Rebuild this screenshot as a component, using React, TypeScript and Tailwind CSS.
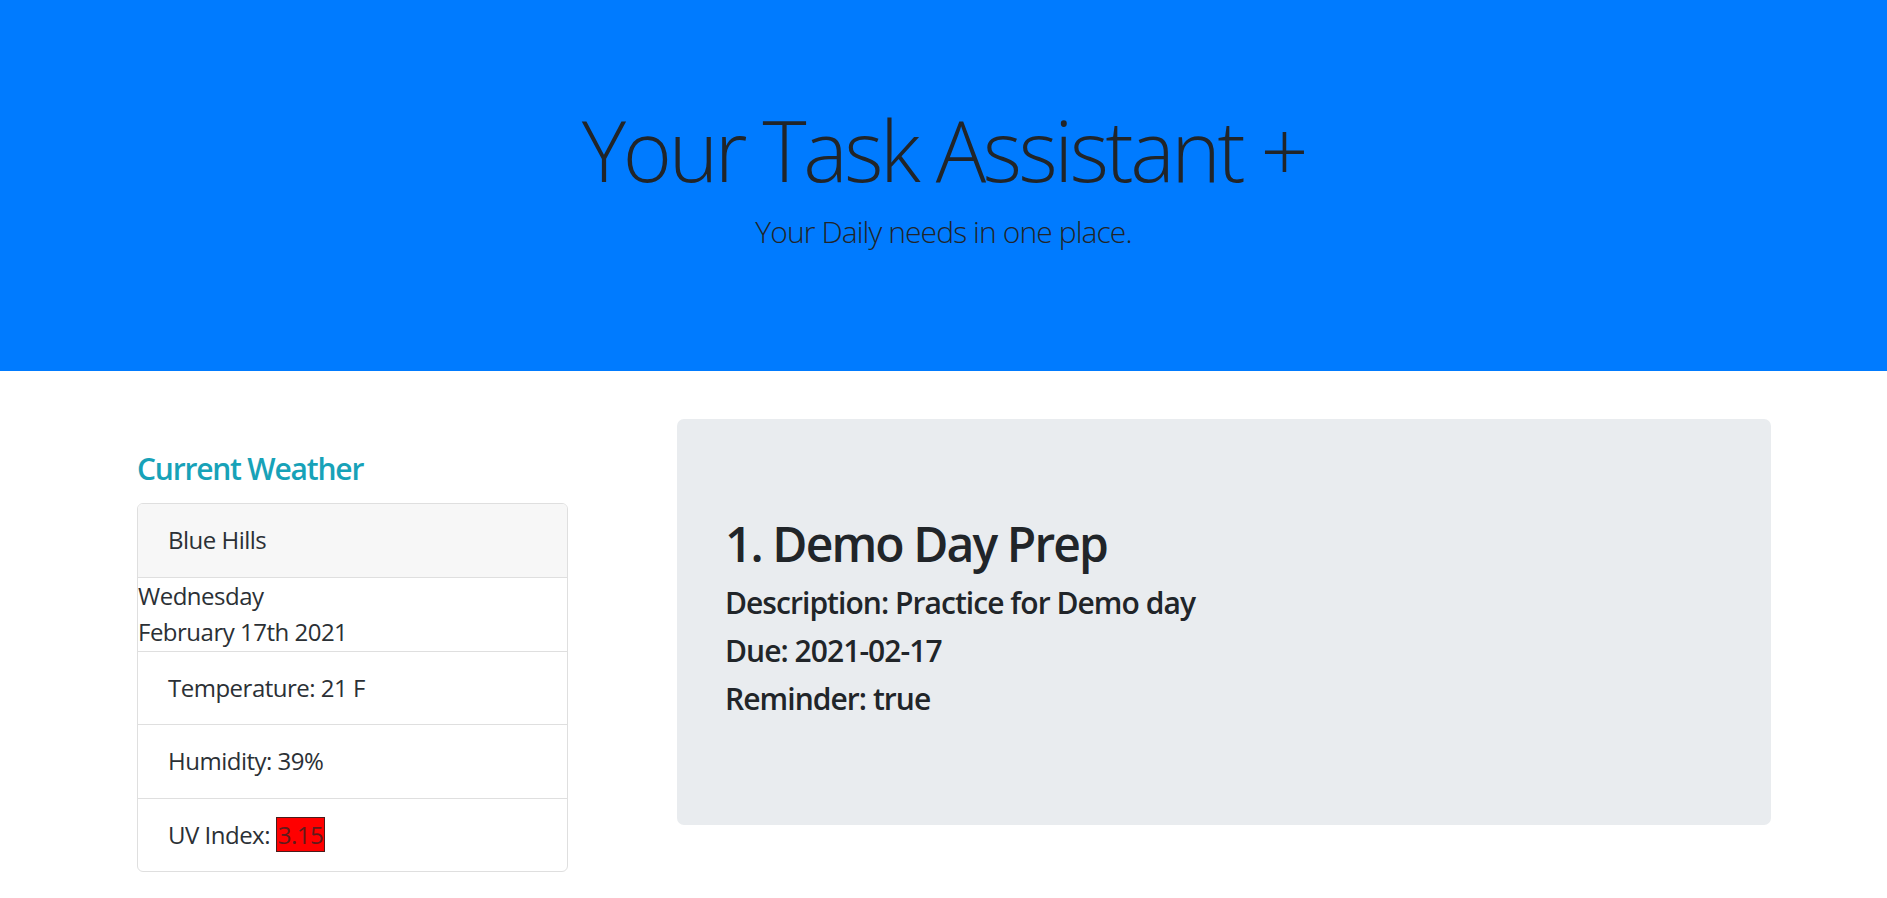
import React from 'react'

const font = { fontFamily: '"Open Sans", "Noto Sans", sans-serif' }

function Header() {
  return (
    <header className="bg-[#007bff] h-[371px] flex flex-col items-center pt-[100px] text-[#212529]">
      <h1 className="text-[84px] font-light leading-[1.2] tracking-[-3.4px] mb-[8px]">Your Task Assistant +</h1>
      <p className="text-[30px] font-light leading-[1.5] tracking-[-0.9px]">Your Daily needs in one place.</p>
    </header>
  )
}

function WeatherRow({ children }: { children: React.ReactNode }) {
  return (
    <li className="py-[18px] px-[30px] border-t border-[#dfdfdf]">{children}</li>
  )
}

function Weather() {
  return (
    <div className="w-[431px] mt-[32px] shrink-0">
      <h4 className="text-[30px] font-semibold leading-[1.2] tracking-[-1.2px] mb-[16px] text-[#17a2b8]">Current Weather</h4>
      <div className="border border-[#dfdfdf] rounded-[6px] overflow-hidden text-[24px] leading-[36.5px] tracking-[-0.5px] text-[#2b3035]">
        <div className="bg-[#f7f7f7] py-[18px] px-[30px]">Blue Hills</div>
        <ul>
          <li className="border-t border-[#dfdfdf]">
            <div>Wednesday</div>
            <div>February 17th 2021</div>
          </li>
          <WeatherRow>Temperature: 21 F</WeatherRow>
          <WeatherRow>Humidity: 39%</WeatherRow>
          <WeatherRow>
            UV Index: <span className="bg-[#ff0000] border border-[#4a1c1c] text-[#5e1b1b] px-[1px]">3.15</span>
          </WeatherRow>
        </ul>
      </div>
    </div>
  )
}

function Task() {
  return (
    <div className="bg-[#e9ecef] rounded-[7px] w-[1094px] px-[48px] py-[96px] text-[#212529] ml-[109px]">
      <h2 className="text-[48px] font-semibold leading-[1.2] tracking-[-1.9px] mb-[12px]">1. Demo Day Prep</h2>
      <h5 className="text-[30px] font-semibold leading-[1.2] tracking-[-0.95px] mb-[12px]">Description: Practice for Demo day</h5>
      <h5 className="text-[30px] font-semibold leading-[1.2] tracking-[-0.95px] mb-[12px]">Due: 2021-02-17</h5>
      <h5 className="text-[30px] font-semibold leading-[1.2] tracking-[-0.95px] mb-[12px]">Reminder: true</h5>
    </div>
  )
}

export default function App() {
  return (
    <div style={font} className="min-h-screen bg-white">
      <Header />
      <main className="flex items-start pl-[137px] pt-[48px]">
        <Weather />
        <Task />
      </main>
    </div>
  )
}
